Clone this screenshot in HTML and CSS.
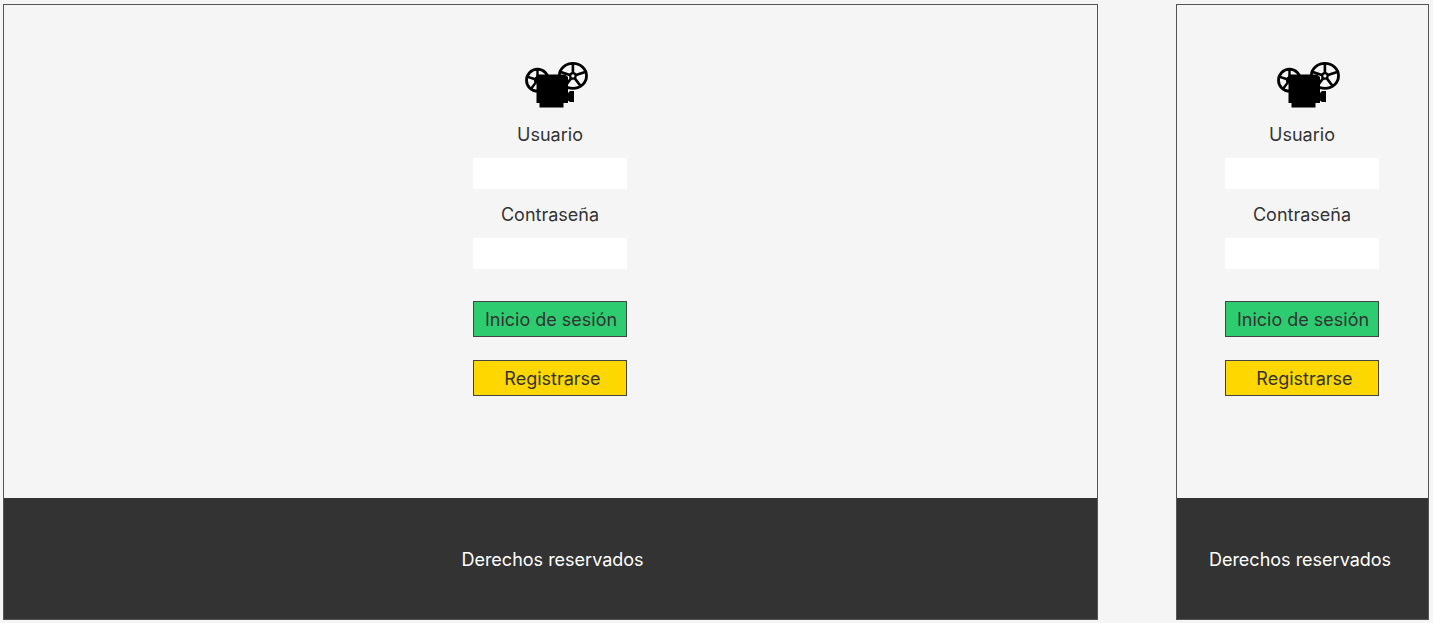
FILE: index.html
```html
<!DOCTYPE html>
<html lang="es">
<head>
<meta charset="utf-8">
<meta name="viewport" content="width=device-width, initial-scale=1">
<title>Inicio de sesión</title>
<link rel="stylesheet" href="styles.css">
</head>
<body>
<svg class="symbols" aria-hidden="true">
  <symbol id="camera" viewBox="-2 7 75 46">
    <g fill="none" stroke="#000">
      <circle cx="22.5" cy="25.2" r="11" stroke-width="2.8"/>
      <path d="M22.5 25V14M22.5 25L12 21.6M22.5 25L16 34M22.5 25L33 21.6" stroke-width="2.4"/>
      <ellipse cx="57.9" cy="20.9" rx="13.6" ry="12.5" stroke-width="2.8"/>
      <path d="M57.9 20.9V8M57.9 20.9L45 16.7M57.9 20.9L50 31.5M57.9 20.9L66 31.5M57.9 20.9L71 16.7" stroke-width="2.6"/>
    </g>
    <circle cx="22.5" cy="25" r="3.6"/>
    <circle cx="57.9" cy="20.9" r="3.8"/>
    <circle cx="57.9" cy="20.9" r="1.6" fill="#f5f5f5"/>
    <path d="M21.5 19.5H50L53 22V38L55 36H59V47H55L53 45.5V48H48.5V52.5H24.5V48H21.5Z"/>
  </symbol>
</svg>

<div class="board">
  <section class="screen">
    <main class="content">
      <svg class="logo" role="img" aria-label="Cámara de cine"><use href="#camera"/></svg>
      <form class="login">
        <label class="label" for="user-wide">Usuario</label>
        <input class="field" id="user-wide" type="text">
        <label class="label" for="pass-wide">Contraseña</label>
        <input class="field" id="pass-wide" type="password">
        <div class="actions">
          <button class="button button-login" type="submit">Inicio de sesión</button>
          <button class="button button-register" type="button">Registrarse</button>
        </div>
      </form>
    </main>
    <footer class="footer footer-wide">Derechos reservados</footer>
  </section>

  <section class="screen">
    <main class="content">
      <svg class="logo" role="img" aria-label="Cámara de cine"><use href="#camera"/></svg>
      <form class="login">
        <label class="label" for="user-narrow">Usuario</label>
        <input class="field" id="user-narrow" type="text">
        <label class="label" for="pass-narrow">Contraseña</label>
        <input class="field" id="pass-narrow" type="password">
        <div class="actions">
          <button class="button button-login" type="submit">Inicio de sesión</button>
          <button class="button button-register" type="button">Registrarse</button>
        </div>
      </form>
    </main>
    <footer class="footer footer-narrow">Derechos reservados</footer>
  </section>
</div>
</body>
</html>
```

FILE: styles.css
```css
* {
  box-sizing: border-box;
}

body {
  margin: 0;
  background: #f5f5f5;
  color: #333;
  font-family: Inter, "Liberation Sans", sans-serif;
  font-size: 18px;
  line-height: 24px;
}

.symbols {
  display: none;
}

.board {
  display: grid;
  grid-template-columns: 1fr 253px;
  gap: 78px;
  min-height: 100vh;
  padding: 4px 4px 3px 3px;
}

.screen {
  display: flex;
  flex-direction: column;
  border: 1px solid #555;
}

.content {
  flex: 1;
  display: flex;
  flex-direction: column;
  align-items: center;
  padding: 57px 1px 48px 0;
}

.logo {
  width: 75px;
  height: 46px;
  margin-bottom: 15px;
}

.login {
  display: flex;
  flex-direction: column;
  width: 154px;
}

.label {
  margin-bottom: 11px;
  text-align: center;
}

.field {
  width: 100%;
  height: 31px;
  margin-bottom: 14px;
  padding: 0 8px;
  border: 0;
  border-radius: 0;
  background: #fff;
  color: inherit;
  font: inherit;
}

.actions {
  display: flex;
  flex-direction: column;
  gap: 23px;
  padding-top: 18px;
}

.button {
  height: 36px;
  padding: 1px 0 0 2px;
  border: 1px solid #444;
  border-radius: 0;
  color: inherit;
  font: inherit;
  white-space: nowrap;
}

.button-login {
  background: #2ecc71;
}

.button-register {
  padding-left: 5px;
  background: #ffd700;
}

.footer {
  display: flex;
  align-items: center;
  justify-content: center;
  min-height: 121px;
  padding-top: 2px;
  background: #333;
  color: #fff;
}

.footer-wide {
  padding-left: 4px;
}

.footer-narrow {
  padding-right: 5px;
}
```
